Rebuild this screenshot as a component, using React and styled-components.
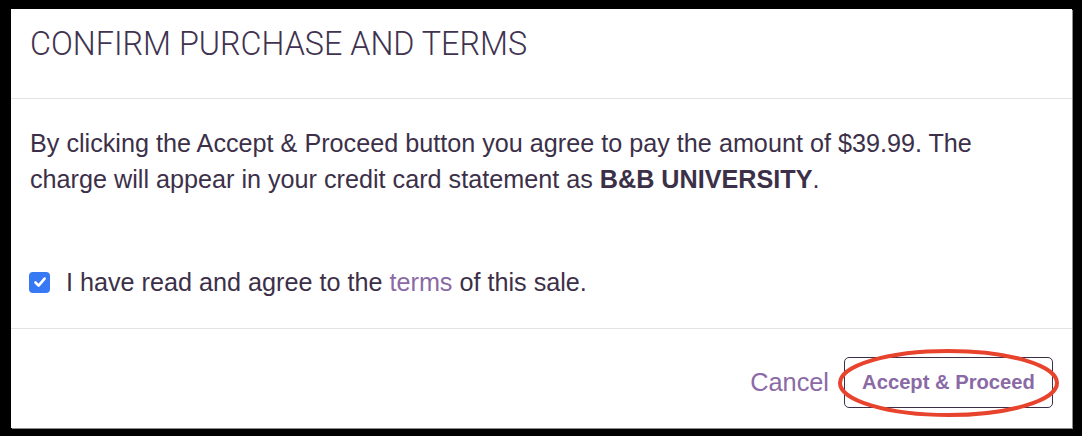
import React from 'react'
import styled, { createGlobalStyle } from 'styled-components'


/* <----------- styled components -----------> */

const GlobalStyle = createGlobalStyle`
  html, body {
    margin: 0;
    padding: 0;
    background: #000;
  }
  body {
    font-family: 'Liberation Sans', Arial, sans-serif;
  }
`

const Page = styled.div`
  padding: 9px 10px 8px 11px;
  height: 436px;
  box-sizing: border-box;
`

const Modal = styled.div`
  background: #fff;
  height: 100%;
  display: flex;
  flex-direction: column;
  box-shadow: 1px 1px 0 #8d8d8d;
  color: #3c3049;
`

const Header = styled.header`
  height: 90px;
  box-sizing: border-box;
  padding: 16px 19px 0;
  border-bottom: 1px solid #e3e3e3;
  h2 {
    margin: 0;
    font-family: Roboto, sans-serif;
    font-weight: 300;
    font-size: 32.3px;
    line-height: 38px;
    color: #3f3350;
  }
`

const Body = styled.section`
  flex: 1;
  padding: 26px 19px 0;
  border-bottom: 1px solid #e3e3e3;
  font-size: 25.2px;
  line-height: 36px;
  p {
    margin: 0 0 67px;
    max-width: 960px;
  }
  strong {
    font-weight: 700;
  }
`

const Agree = styled.label`
  display: flex;
  align-items: center;
  gap: 16px;
  cursor: pointer;
  a {
    color: #8a6aa6;
    text-decoration: none;
  }
`

const Tick = styled.span`
  width: 21px;
  height: 21px;
  margin-left: -1px;
  border-radius: 4px;
  background: ${props => props.checked ? '#3778f4' : '#fff'};
  display: flex;
  align-items: center;
  justify-content: center;
  flex-shrink: 0;
`

const Footer = styled.footer`
  height: 99px;
  box-sizing: border-box;
  display: flex;
  justify-content: flex-end;
  align-items: flex-start;
  gap: 15px;
  padding: 28px 19px 0;
`

const LinkButton = styled.button`
  background: none;
  border: none;
  padding: 0;
  height: 51px;
  font-family: 'Liberation Sans', Arial, sans-serif;
  font-size: 25.3px;
  color: #8a6aa6;
  cursor: pointer;
`

const ButtonWrap = styled.div`
  position: relative;
`

const Button = styled.button`
  width: 209px;
  height: 51px;
  background: #fff;
  border: 1px solid #3c3049;
  border-radius: 5px;
  font-family: 'Liberation Sans', Arial, sans-serif;
  font-weight: 700;
  font-size: 20.2px;
  color: #8a6aa6;
  cursor: pointer;
`

const Circle = styled.svg`
  position: absolute;
  left: -7px;
  top: -9px;
  pointer-events: none;
`
/* <-----------------------------------------> */


export default function App() {
  return (
    <Page>
      <GlobalStyle />
      <Modal>
        <Header>
          <h2>CONFIRM PURCHASE AND TERMS</h2>
        </Header>

        <Body>
          <p>
            By clicking the Accept &amp; Proceed button you agree to pay the amount of $39.99. The
            charge will appear in your credit card statement as <strong>B&amp;B UNIVERSITY</strong>.
          </p>
          <Agree>
            <Tick checked>
              <svg width="14" height="14" viewBox="0 0 14 14">
                <path d="M2.5 7.5 L5.6 10.6 L11.6 3.6" fill="none" stroke="#fff" strokeWidth="2.6" strokeLinecap="round" strokeLinejoin="round" />
              </svg>
            </Tick>
            <span>I have read and agree to the <a href="#terms">terms</a> of this sale.</span>
          </Agree>
        </Body>

        <Footer>
          <LinkButton>Cancel</LinkButton>
          <ButtonWrap>
            <Button>Accept &amp; Proceed</Button>
            {/* red annotation ring */}
            <Circle width="223" height="70" viewBox="0 0 223 70">
              <ellipse cx="111.5" cy="35" rx="108.5" ry="32" fill="none" stroke="#e8432d" strokeWidth="4" />
            </Circle>
          </ButtonWrap>
        </Footer>
      </Modal>
    </Page>
  )
}
